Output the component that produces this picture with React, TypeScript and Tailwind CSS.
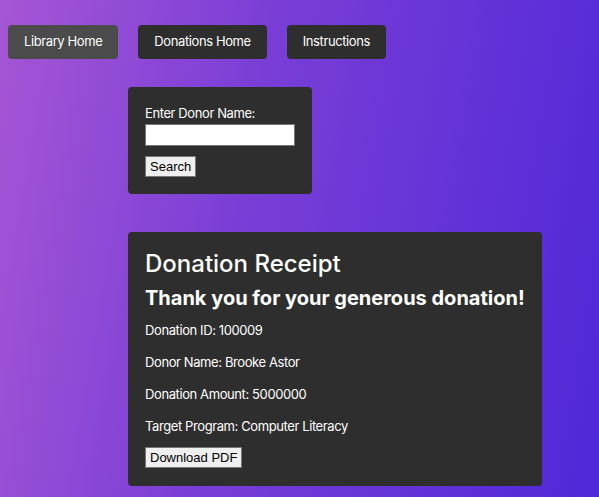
import { useState } from 'react'

const NAV_MENU = [
  { id: 1, title: 'Library Home', active: true },
  { id: 2, title: 'Donations Home', active: false },
  { id: 3, title: 'Instructions', active: false },
]

const RECEIPT = [
  { id: 1, label: 'Donation ID', value: '100009' },
  { id: 2, label: 'Donor Name', value: 'Brooke Astor' },
  { id: 3, label: 'Donation Amount', value: '5000000' },
  { id: 4, label: 'Target Program', value: 'Computer Literacy' },
]

export default function App() {
  const [donor, setDonor] = useState('')

  return (
    <div className="min-h-screen w-full bg-[linear-gradient(100deg,#a656d5_0%,#7a3ed6_40%,#4f28d8_100%)] font-['Inter','Liberation_Sans',sans-serif] text-white text-[13px] tracking-[-0.4px]">
      {/* ---------- Nav ---------- */}
      <nav className="flex gap-[20px] pl-2 pt-[25px]">
        {NAV_MENU.map((m) => (
          <button
            key={m.id}
            type="button"
            className={`h-[34px] px-4 rounded-[4px] text-[13px] text-white ${m.active ? 'bg-[#4b4b4b]' : 'bg-[#2e2e2e]'}`}
          >
            {m.title}
          </button>
        ))}
      </nav>

      {/* ---------- Search ---------- */}
      <div className="ml-[128px] mt-[28px] w-[184px] rounded-[4px] bg-[#2e2e2e] px-[17px] pt-[18px] pb-[17px]">
        <label className="block leading-[16px]">Enter Donor Name:</label>
        <input
          value={donor}
          onChange={(e) => setDonor(e.target.value)}
          className="mt-[3px] block h-[22px] w-[150px] border border-[#767676] bg-white px-1 text-black outline-none"
        />
        <button
          type="button"
          className="mt-[10px] block h-[21px] border border-[#767676] bg-[#efefef] px-[4px] font-['Liberation_Sans',sans-serif] text-[13px] leading-[19px] tracking-normal text-black"
        >
          Search
        </button>
      </div>

      {/* ---------- Receipt ---------- */}
      <div className="ml-[128px] mt-[38px] w-[414px] rounded-[4px] bg-[#2e2e2e] px-[17px] pt-[17px] pb-[18px]">
        <h1 className="text-[24px] font-medium leading-[29px] tracking-normal">Donation Receipt</h1>
        <h2 className="mt-[8px] text-[20px] font-bold leading-[24px] tracking-normal">
          Thank you for your generous donation!
        </h2>
        <div className="mt-[12px] flex flex-col gap-[16px]">
          {RECEIPT.map((r) => (
            <p key={r.id} className="leading-[16px]">
              {r.label}: {r.value}
            </p>
          ))}
        </div>
        <button
          type="button"
          className="mt-[13px] block h-[21px] border border-[#767676] bg-[#efefef] px-[4px] font-['Liberation_Sans',sans-serif] text-[13px] leading-[19px] tracking-normal text-black"
        >
          Download PDF
        </button>
      </div>
    </div>
  )
}
